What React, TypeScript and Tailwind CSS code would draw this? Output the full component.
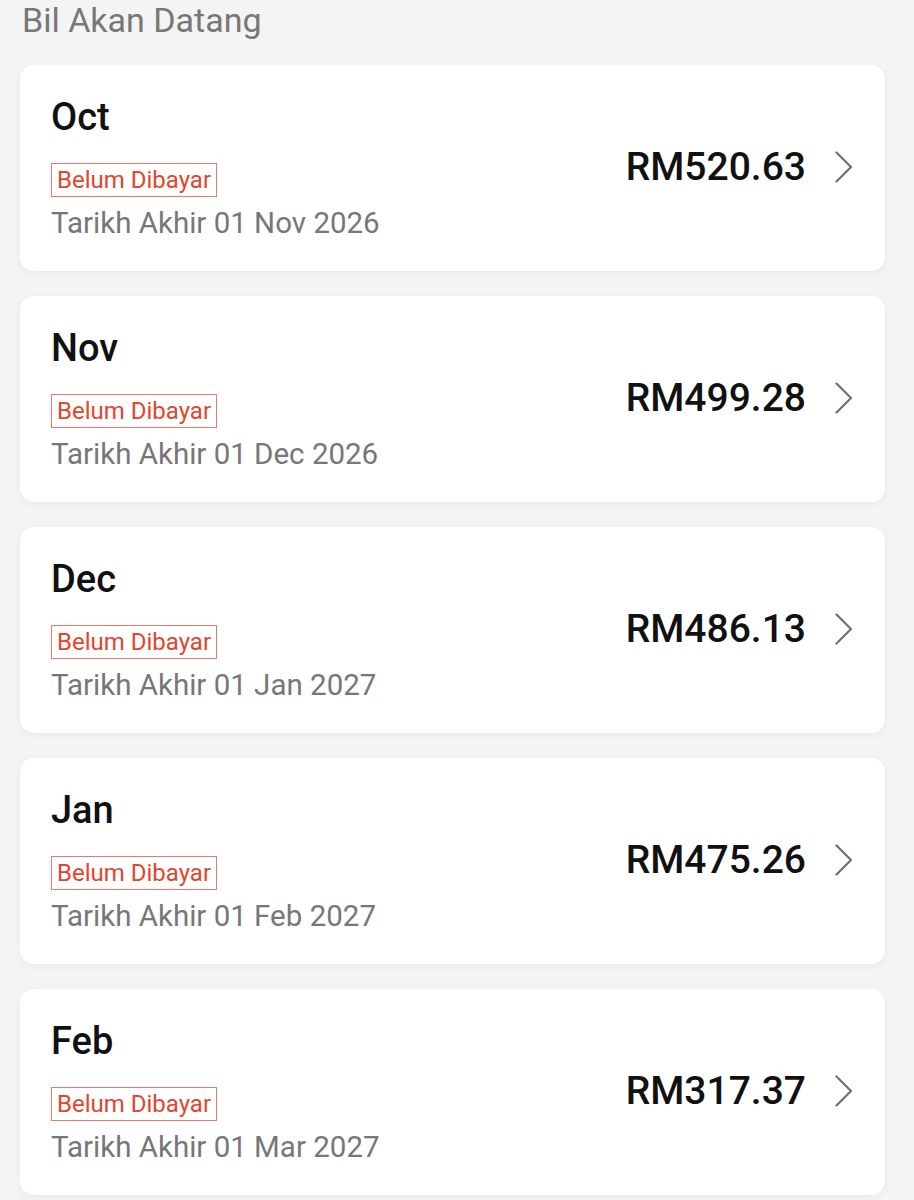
const bills = [
  { month: "Oct", amount: "RM520.63", due: "01 Nov 2026" },
  { month: "Nov", amount: "RM499.28", due: "01 Dec 2026" },
  { month: "Dec", amount: "RM486.13", due: "01 Jan 2027" },
  { month: "Jan", amount: "RM475.26", due: "01 Feb 2027" },
  { month: "Feb", amount: "RM317.37", due: "01 Mar 2027" },
];

function Chevron() {
  return (
    <svg width="18" height="32" viewBox="0 0 18 32" fill="none" className="shrink-0">
      <polyline
        points="1.5,1.5 16,16 1.5,30.5"
        stroke="#6f6f6f"
        strokeWidth="2.2"
        strokeLinecap="round"
        strokeLinejoin="round"
      />
    </svg>
  );
}

function BillCard({ month, amount, due }: { month: string; amount: string; due: string }) {
  return (
    <div className="flex items-center justify-between rounded-[14px] bg-white pl-[31px] pr-[32px] pt-[29px] pb-[31px] shadow-[0_2px_8px_rgba(0,0,0,0.05)]">
      <div className="flex flex-col items-start">
        <div className="text-[38px] leading-[46px] font-medium text-[#111]">{month}</div>
        <div className="mt-[23px] border border-[#ec7a66] px-[5px] text-[24px] leading-[32px] text-[#e4452c]">
          Belum Dibayar
        </div>
        <div className="mt-[9px] text-[29.5px] leading-[34px] text-[#777]">Tarikh Akhir {due}</div>
      </div>
      <div className="flex items-center gap-[29px]">
        <div className="text-[39px] leading-[46px] font-medium text-[#111]">{amount}</div>
        <Chevron />
      </div>
    </div>
  );
}

export default function App() {
  return (
    <div className="min-h-[1200px] bg-[#f4f4f4] font-['Roboto',sans-serif]">
      <div className="pl-[22px] text-[34px] leading-[40px] text-[#777]">Bil Akan Datang</div>
      <div className="mt-[25px] ml-[20px] mr-[29px] flex flex-col gap-[25px]">
        {bills.map((b) => (
          <BillCard key={b.month} {...b} />
        ))}
      </div>
    </div>
  );
}
